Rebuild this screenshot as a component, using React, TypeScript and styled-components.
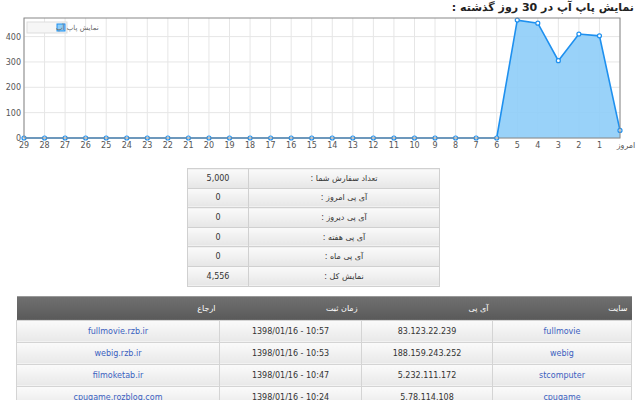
import React from "react";
import styled, { createGlobalStyle } from "styled-components";

const Global = createGlobalStyle`
  body { margin: 0; background: #fff; font-family: Tahoma, "DejaVu Sans", "Liberation Sans", sans-serif; direction: rtl; }
`;
const Page = styled.div`width: 640px; height: 400px; overflow: hidden; display: flex; flex-direction: column;`;
const Title = styled.div`font-size: 11px; font-weight: bold; color: #222; padding: 1px 6px 0 0; height: 15px; box-sizing: border-box;`;
const ChartWrap = styled.div`height: 140px; direction: ltr;`;
const StatsTable = styled.table`
  margin: 14px 200px 0 0; border-collapse: collapse; width: 253px; font-size: 8px; color: #333;
  td { border: 1px solid #d0d0d0; height: 18.6px; padding: 0; text-align: center;
       background: linear-gradient(#fafafa, #e6e6e6); }
`;
const ValCell = styled.td`width: 60px;`;
const LogTable = styled.table`
  margin: 9px 8px 0 16px; border-collapse: collapse; width: 616px; font-size: 8px;
  th { background: linear-gradient(#707070, #5a5a5a); color: #fff; font-weight: normal; text-align: right;
       height: 23px; padding: 0 4px; border-top: 1px solid #999; }
  td { border: 1px solid #d4d4d4; height: 19px; text-align: center; background: linear-gradient(#fbfbfb, #e8e8e8); }
`;
const Cell = styled.td<{ $link?: boolean }>`color: ${p => (p.$link ? "#3b5fc0" : "#333")};`;
const Ltr = styled.span`direction: ltr; unicode-bidi: isolate;`;

const labels = ["29","28","27","26","25","24","23","22","21","20","19","18","17","16","15","14","13","12","11","10","9","8","7","6","5","4","3","2","1","امروز"];
const vals = [...Array(24).fill(0), 465, 453, 305, 410, 403, 30];

function Chart() {
  const x0 = 24, x1 = 620, yTop = 4, y0 = 124;
  const sx = (i: number) => x0 + (i * (x1 - x0)) / 29;
  const sy = (v: number) => y0 - v * 0.2535;
  const pts = vals.map((v, i) => `${sx(i)},${sy(v)}`).join(" ");
  return (
    <svg width="640" height="140" viewBox="0 0 640 140" style={{ display: "block" }}>
      <rect x={x0} y={yTop} width={x1 - x0} height={y0 - yTop} fill="#fff" />
      {[0, 100, 200, 300, 400].map(v => (
        <g key={v}>
          <line x1={x0} x2={x1} y1={sy(v)} y2={sy(v)} stroke="#e6e6e6" />
          <text x={x0 - 3} y={sy(v) + 3} fontSize="8" fill="#555" textAnchor="end" fontFamily="DejaVu Sans">{v}</text>
        </g>
      ))}
      {labels.map((l, i) => (
        <g key={l}>
          <line x1={sx(i)} x2={sx(i)} y1={yTop} y2={y0} stroke="#e6e6e6" />
          <text x={sx(i) + (i === 29 ? 6 : 0)} y={y0 + 10} fontSize="8" fill="#555" textAnchor="middle" fontFamily="DejaVu Sans">{l}</text>
        </g>
      ))}
      <polygon points={`${sx(0)},${y0} ${pts} ${sx(29)},${y0}`} fill="#8ecdf8" opacity="0.9" />
      <polyline points={pts} fill="none" stroke="#1e90ef" strokeWidth="1.6" />
      {vals.map((v, i) => <circle key={i} cx={sx(i)} cy={sy(v)} r="2" fill="#fff" stroke="#1e90ef" strokeWidth="1.2" />)}
      <rect x={x0} y={yTop} width={x1 - x0} height={y0 - yTop} fill="none" stroke="#888" />
      <rect x={27} y={8} width={40} height={11} fill="#f6f6f6" stroke="#ddd" />
      <rect x={57} y={10} width={8} height={7} fill="#8ecdf8" stroke="#1e90ef" />
      <text x={56} y={16} fontSize="7" fill="#666" textAnchor="end" fontFamily="DejaVu Sans" direction="rtl">نمایش پاپ آپ</text>
    </svg>
  );
}

const stats = [["تعداد سفارش شما :", "5,000"], ["آی پی امروز :", "0"], ["آی پی دیروز :", "0"], ["آی پی هفته :", "0"], ["آی پی ماه :", "0"], ["نمایش کل :", "4,556"]];
const logs = [
  ["fullmovie", "83.123.22.239", "1398/01/16 - 10:57", "fullmovie.rzb.ir"],
  ["webig", "188.159.243.252", "1398/01/16 - 10:53", "webig.rzb.ir"],
  ["stcomputer", "5.232.111.172", "1398/01/16 - 10:47", "filmoketab.ir"],
  ["cpugame", "5.78.114.108", "1398/01/16 - 10:24", "cpugame.rozblog.com"],
];

export default function App() {
  return (
    <Page>
      <Global />
      <Title>نمایش پاپ آپ در 30 روز گذشته :</Title>
      <ChartWrap><Chart /></ChartWrap>
      <StatsTable>
        <tbody>
          {stats.map(([l, v]) => (<tr key={l}><td>{l}</td><ValCell>{v}</ValCell></tr>))}
        </tbody>
      </StatsTable>
      <LogTable>
        <thead>
          <tr><th style={{ width: 131 }}>سایت</th><th style={{ width: 123 }}>آی پی</th><th style={{ width: 134 }}>زمان ثبت</th><th>ارجاع</th></tr>
        </thead>
        <tbody>
          {logs.map(r => (
            <tr key={r[0]}><Cell $link>{r[0]}</Cell><Cell>{r[1]}</Cell><Cell><Ltr>{r[2]}</Ltr></Cell><Cell $link>{r[3]}</Cell></tr>
          ))}
        </tbody>
      </LogTable>
    </Page>
  );
}
